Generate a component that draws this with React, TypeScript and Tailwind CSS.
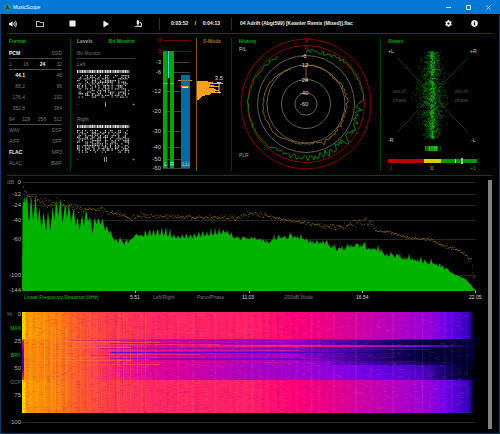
import { ReactNode } from 'react'
import { FaCog, FaInfoCircle, FaMicroscope, FaPlay, FaRegFolder, FaStop, FaVolumeUp } from 'react-icons/fa'

type Point = [number, number]

// Small seeded generator so the plots are the same on every render
function createRandom(seed: number) {
    let state = seed
    return () => {
        state = (state * 1664525 + 1013904223) % 4294967296
        return state / 4294967296
    }
}

function interpolate(keys: Point[], x: number) {
    for (let i = 1; i < keys.length; i++) {
        if (x <= keys[i][0]) {
            const [x0, y0] = keys[i - 1]
            const [x1, y1] = keys[i]
            return y0 + ((y1 - y0) * (x - x0)) / (x1 - x0)
        }
    }
    return keys[keys.length - 1][1]
}

const dot = (x: number, y: number, w = 1, h = 1) => `M${x.toFixed(1)} ${y.toFixed(1)}h${w}v${h}h${-w}z`

/* ---------- Format ---------- */

const formatRows = [
    { cells: ['PCM', 'DSD'], active: 'PCM', line: true },
    { cells: ['1', '16', '24', '32'], active: '24', line: true },
    { cells: ['44.1', '48'], active: '44.1', numeric: true },
    { cells: ['88.2', '96'], numeric: true },
    { cells: ['176.4', '192'], numeric: true },
    { cells: ['352.8', '384'], numeric: true },
    { cells: ['64', '128', '256', '512'], line: true },
    { cells: ['WAV', 'DSF'] },
    { cells: ['AIFF', 'DFF'] },
    { cells: ['FLAC', 'MP3'], active: 'FLAC' },
    { cells: ['ALAC', 'BWF'] },
]

function FormatPanel() {
    return (
        <section className="border-r border-[#003c00] pl-0.5 pr-2">
            <h2 className="mb-[3px] h-[7px] font-bold text-[#00b400]">Format</h2>
            {formatRows.map(row => (
                <div
                    key={row.cells[0]}
                    className={`flex h-[11px] items-center justify-between border-b ${row.line ? 'border-[#4a4a4a]' : 'border-transparent'}`}
                >
                    {row.cells.map((cell, index) => (
                        <span
                            key={cell}
                            className={`${row.numeric && index === 0 ? 'w-4 text-right' : ''} ${cell === row.active ? 'font-bold text-[#f0f0f0]' : 'text-[#787878]'}`}
                        >
                            {cell}
                        </span>
                    ))}
                </div>
            ))}
        </section>
    )
}

/* ---------- Bit monitor ---------- */

function bitPath(seed: number) {
    const random = createRandom(seed)
    let path = ''
    for (let col = 0; col < 32; col++) {
        const x = col * 1.65
        const density = col % 4 === 1 ? 0.75 : 0.25 + random() * 0.35
        for (let row = 0; row < 14; row++) {
            if (random() < density) path += dot(x, 5 + row * 1.65, 1, 1.3)
        }
    }
    return path
}

function BitChannel({ name, seed, marks }: { name: string; seed: number; marks: number }) {
    return (
        <div>
            <div className="flex h-[11px] items-center text-[#828282]">{name}</div>
            <svg viewBox="0 0 58 29" className="block w-full" role="img" aria-label={`${name} bits`}>
                {Array.from({ length: 32 }, (_, i) => (
                    <rect key={i} x={i * 1.65} y="0" width="1.2" height="3" fill={i % 5 === 1 ? '#8c8c8c' : '#f0f0f0'} />
                ))}
                <path d={bitPath(seed)} fill="#d2d2d2" />
            </svg>
            <div className="flex h-[11px] items-center justify-between text-[#a0a0a0]">
                <span>-</span>
                <span className="flex gap-px">
                    {Array.from({ length: marks }, (_, i) => (
                        <i key={i} className="h-[5px] w-px bg-[#8c8c8c]" />
                    ))}
                </span>
                <span>+</span>
            </div>
        </div>
    )
}

function BitMonitor() {
    return (
        <div className="pr-[5px]">
            <div className="mb-[3px] flex h-[7px] items-center justify-between whitespace-nowrap font-bold">
                <button className="text-[#a0a0a0]">Levels</button>
                <button className="text-[#00b400]">Bit Monitor</button>
            </div>
            <div className="flex h-[11px] items-center border-b border-[#3c3c3c] text-[#6e6e6e]">Bit Monitor</div>
            <div className="flex flex-col gap-1">
                <BitChannel name="Left" seed={7} marks={1} />
                <BitChannel name="Right" seed={21} marks={2} />
            </div>
        </div>
    )
}

/* ---------- Level meters ---------- */

const meterScale = [
    { label: '3', y: 40, red: true },
    { label: '0', y: 51, red: true },
    { label: '-3', y: 62 },
    { label: '-6', y: 72 },
    { label: '-12', y: 91 },
    { label: '-20', y: 111 },
    { label: '-30', y: 131 },
    { label: '-40', y: 147 },
    { label: '-50', y: 159 },
    { label: '-60', y: 168 },
]

function LevelMeters() {
    return (
        <svg viewBox="140 38 56 133" className="block w-full overflow-visible text-[6px]" role="img" aria-label="Level meters">
            {meterScale.map(({ label, y, red }) => (
                <g key={label}>
                    <text x="161" y={y + 2} textAnchor="end" fill={red ? '#c80000' : '#c8c8c8'}>{label}</text>
                    <path d={`M163 ${y + 0.5}H190`} stroke={red ? '#780000' : '#404040'} />
                </g>
            ))}
            <rect x="163" y="51" width="4.5" height="117" fill="#00a800" />
            <rect x="170" y="51" width="4" height="117" fill="#00a800" />
            <path d="M163 83.5h4.5M170 83.5h4" stroke="#20f020" />
            <rect x="168" y="51" width="1.5" height="27" fill="#46c8ff" />
            <rect x="181" y="75" width="9" height="93" fill="#006e9b" />
            <path d="M178 80.5h3M190 80.5h2" stroke="#d28c1e" />
            <path d="M181 80.5h9" stroke="#7d7d50" />
            <path d="M181 86.5h8" stroke="#f5a020" />
            <path d="M182 87.5h6" stroke="#e6e6e6" />
            <g fill="#dcdcdc">
                <text x="164" y="166">L</text>
                <text x="170" y="166">R</text>
                <text x="182" y="166">LU</text>
            </g>
        </svg>
    )
}

const loudness = [11, 16, 26, 13, 17, 22, 12, 17, 19, 22, 18, 23, 14, 13, 8, 5, 4, 3, 2]

function ShortTermMode() {
    return (
        <div className="border-l border-[#8a5510]">
            <button className="block h-[7px] w-full pr-1 text-center font-bold text-[#a87020]">S-Mode</button>
            <svg viewBox="197 45 34 124" className="block w-full text-[6px]" role="img" aria-label="Loudness distribution">
                {loudness.map((width, i) => (
                    <rect key={i} x="197" y={81 + i} width={width} height="1" fill="#f5a020" />
                ))}
                <text x="219" y="80" textAnchor="middle" fill="#d2d2d2">3.5</text>
                <path d="M217 82.5h4M219 82v10M217 92.5h4" stroke="#d2d2d2" fill="none" />
            </svg>
        </div>
    )
}

/* ---------- History ---------- */

const historyRings = [
    { r: 65, label: '3', color: '#8c0000' },
    { r: 58.5, label: '0', color: '#8c0000' },
    { r: 48.5, label: '-6', color: '#5f5f5f' },
    { r: 39, label: '-12', color: '#5f5f5f' },
    { r: 24.5, label: '-24', color: '#5f5f5f' },
    { r: 11, label: '-40', color: '#5f5f5f' },
]

const peakKeys: Point[] = [[0, 53], [20, 54], [45, 57], [85, 58], [92, 54], [110, 54], [150, 53], [180, 54], [212, 54], [222, 57], [270, 58], [300, 57], [330, 55]]
const peakNoise: Point[] = [[0, 3], [30, 2], [50, 1], [85, 1], [92, 5], [155, 5], [165, 3], [212, 3], [222, 0.6], [290, 0.7], [330, 1.5]]
const plrKeys: Point[] = [[0, 39], [15, 39], [45, 38], [70, 41], [90, 41], [110, 40], [150, 42], [158, 43], [165, 39], [180, 40], [205, 40], [225, 43], [270, 43], [300, 42], [336, 38]]
const plrNoise: Point[] = [[0, 0.7], [100, 1.5], [160, 2], [180, 1], [336, 0.7]]

function polarTrace(keys: Point[], noise: Point[], end: number, seed: number) {
    const random = createRandom(seed)
    const points: string[] = []
    for (let deg = 0; deg <= end; deg += 2) {
        const r = interpolate(keys, deg) + (random() * 2 - 1) * interpolate(noise, deg)
        const a = (deg * Math.PI) / 180
        points.push(`${(306 + r * Math.sin(a)).toFixed(1)} ${(104 - r * Math.cos(a)).toFixed(1)}`)
    }
    return points.join('L')
}

function HistoryPanel() {
    return (
        <section className="border-r border-[#003c00]">
            <svg viewBox="232 38 148 133" className="block w-full overflow-visible text-[6px]" role="img" aria-label="History">
                <g className="text-[5px]">
                    <text x="239" y="43" className="font-bold" fill="#00b400">History</text>
                    <text x="239" y="51" fill="#c8c8c8">P/L</text>
                    <text x="239" y="157" fill="#a0a0a0">PLR</text>
                </g>
                {historyRings.map(({ r, color }) => (
                    <circle key={r} cx="306" cy="104" r={r} fill="none" stroke={color} />
                ))}
                <path d={`M${polarTrace(peakKeys, peakNoise, 330, 5)}`} fill="none" stroke="#00a000" strokeWidth="0.8" />
                <path d={`M306 82L${polarTrace(plrKeys, plrNoise, 336, 11)}`} fill="none" stroke="#b4761a" strokeWidth="0.8" />
                {historyRings.map(({ r, label }) => (
                    <text key={r} x={r > 50 ? 306 : 304} y={r > 50 ? 107 - r : 106 - r} textAnchor="middle" fill={r > 50 ? '#dc0000' : '#dcdcdc'}>
                        {label}
                    </text>
                ))}
                <text x="304" y="106" textAnchor="middle" fill="#dcdcdc">-60</text>
            </svg>
        </section>
    )
}

/* ---------- Stereo ---------- */

function scatterPath(count: number, spread: number, seed: number) {
    const random = createRandom(seed)
    let path = ''
    for (let i = 0; i < count; i++) {
        const y = 51 + random() * 87
        const bulge = 0.45 + 0.55 * Math.sin(((y - 51) / 87) * Math.PI)
        const x = 432.3 + (random() + random() + random() - 1.5) * spread * bulge
        path += dot(x - 0.5, y, 1, 1)
    }
    return path
}

function StereoPanel() {
    return (
        <section>
            <svg viewBox="381 38 112 133" className="block w-full text-[5px]" role="img" aria-label="Stereo">
                <text x="388" y="43" className="font-bold" fill="#00a000">Stereo</text>
                <path d="M397 57.5L468 132.5M468 57.5L397 132.5" stroke="#2d2d2d" />
                <path d={scatterPath(900, 17, 3)} fill="#006e00" opacity="0.6" />
                <path d={scatterPath(600, 11, 9)} fill="#00a000" opacity="0.6" />
                <path d={scatterPath(330, 3, 17)} fill="#28d228" opacity="0.7" />
                <g fill="#d2d2d2">
                    <text x="388" y="53">+L</text>
                    <text x="470" y="53">+R</text>
                    <text x="388" y="142">-R</text>
                    <text x="471" y="142">-L</text>
                </g>
                <g fill="#505050">
                    <text x="393" y="93">out of</text>
                    <text x="393" y="102">phase</text>
                    <text x="455" y="93">out of</text>
                    <text x="455" y="102">phase</text>
                </g>
                <rect x="425" y="146" width="13" height="5" fill="#008c00" />
                <path d="M429.5 146v5M432 146v5M434.5 146v5M436.5 146v5" stroke="#14d214" />
                <path d="M427 146v5M440.500 146v5" stroke="#004600" />
                <rect x="388" y="159" width="36" height="4" fill="#be0000" />
                <rect x="424" y="159" width="17" height="4" fill="#d7d200" />
                <rect x="441" y="159" width="36" height="4" fill="#009600" />
                <path d="M455.5 159v4" stroke="#a0dca0" />
                <rect x="461" y="158" width="2" height="6" fill="#aab4aa" />
                <text x="388" y="170" fill="#d20000">-1</text>
                <text x="432" y="170" textAnchor="middle" fill="#dcdc00">0</text>
                <text x="476" y="170" textAnchor="end" fill="#00b400">+1</text>
            </svg>
        </section>
    )
}

/* ---------- Spectrum ---------- */

const spectrumScale = [
    { label: '0', y: 182 },
    { label: '-12', y: 194 },
    { label: '-24', y: 205 },
    { label: '-40', y: 220 },
    { label: '-60', y: 239 },
    { label: '-100', y: 275 },
    { label: '-144', y: 290 },
]

// Low end is drawn peak by peak, the rest follows an envelope
const lowPeaks: Point[] = [
    [22.5, 208], [23, 197], [24, 205], [24.5, 196], [25.5, 203], [27, 195], [28.5, 220], [29.5, 219], [31, 194], [33, 220], [34, 214], [35.5, 194],
    [37.5, 224], [39.5, 208], [41.5, 230], [43.5, 212], [46, 231], [48, 212], [50.5, 231], [52.5, 207], [54.5, 220], [56, 201], [58.5, 216],
    [60.5, 198], [62.5, 224], [65, 203], [67, 218], [69, 204], [71, 223], [73.5, 209], [76, 226], [77.5, 217], [79.5, 230], [82, 215], [84, 226],
    [86, 209], [88, 222], [90, 217], [92.5, 234], [94.5, 218], [96.5, 224], [98.5, 218], [100.5, 225], [102.5, 219], [105, 231], [106.5, 226],
    [109, 233], [110.5, 231], [114, 241], [116, 239], [118, 243], [120, 238], [122, 241], [124.5, 245], [126, 239], [128, 243], [130, 240], [133, 238],
    [136, 234], [139, 236], [141, 235], [144, 237],
]
const floorKeys: Point[] = [[144, 236], [165, 235], [175, 238], [190, 238], [205, 236], [225, 233], [232, 237], [240, 241], [250, 239], [258, 240], [267, 244], [275, 240], [302, 239], [308, 244], [325, 244], [335, 251], [350, 250], [360, 248], [372, 251], [385, 256], [400, 260], [420, 263], [435, 265], [445, 270], [455, 275], [465, 279], [470, 284], [475, 290]]
const peakHeight: Point[] = [[144, 11], [170, 9], [180, 5], [195, 7], [215, 9], [228, 6], [240, 6], [260, 6], [300, 7], [360, 8], [420, 8], [450, 3], [475, 0]]
const maxKeys: Point[] = [[23, 189], [28, 196], [35, 198], [45, 202], [60, 203], [80, 209], [100, 209], [115, 213], [130, 218], [140, 215], [160, 216], [200, 217], [240, 217], [250, 212], [260, 214], [275, 217], [300, 222], [325, 226], [345, 225], [355, 222], [372, 222], [375, 230], [390, 232], [410, 238], [430, 239], [445, 246], [460, 251], [471, 259], [473, 276], [475, 277]]
const maxNoise: Point[] = [[23, 5], [60, 6], [80, 4], [130, 3], [160, 3], [180, 2], [260, 4], [280, 1.5], [330, 3], [350, 6], [371, 5], [375, 1], [475, 2]]

function spectrumPath() {
    const random = createRandom(31)
    const points = [...lowPeaks]
    for (let x = 145; x < 475; x += 1) {
        const harmonic = Math.max(0, Math.sin(((x - 144.3) / 4.1) * Math.PI * 2))
        const spike = x < 235 ? harmonic * (0.5 + random() * 0.5) : random() * random() * 1.3
        points.push([x, interpolate(floorKeys, x) - spike * interpolate(peakHeight, x)])
    }
    return `M22 291L${points.map(([x, y]) => `${x} ${y.toFixed(1)}`).join('L')}L476 291Z`
}

function maximaPath() {
    const random = createRandom(77)
    let path = ''
    for (let x = 23; x < 475; x += 0.8) {
        path += dot(x, interpolate(maxKeys, x) + (random() + random() - 1) * interpolate(maxNoise, x), 1, 0.8)
    }
    return path
}

function Spectrum() {
    return (
        <section>
            <svg viewBox="7 176 475 117" className="block w-full overflow-visible text-[6px]" role="img" aria-label="Linear frequency spectrum">
                <text x="7" y="184" fill="#787878">dB</text>
                {spectrumScale.map(({ label, y }) => (
                    <g key={label}>
                        <path d={`M23 ${y + 0.5}H476`} stroke="#262626" />
                        <text x="21" y={y + 2} textAnchor="end" fill="#b4b4b4">{label}</text>
                    </g>
                ))}
                <path d={spectrumPath()} fill="#00b400" />
                <path d={maximaPath()} fill="#96690f" />
                <path d="M135.500 291v2M249.500 291v2M362.500 291v2M475.500 291v2" stroke="#b4b4b4" />
            </svg>
            <div className="ml-[17px] grid h-2 grid-cols-[106fr_23fr_44fr_45fr_41fr_73fr_113fr_13fr] items-center justify-items-start whitespace-nowrap text-[#787878]">
                <h2 className="text-[#00c800]">Linear Frequency Spectrum [kHz]</h2>
                <span className="text-[#dcdcdc]">5.51</span>
                <button>Left/Right</button>
                <button>Pano/Phase</button>
                <span className="text-[#dcdcdc]">11.03</span>
                <button>-200dB Mode</button>
                <span className="text-[#dcdcdc]">16.54</span>
                <span className="text-[#dcdcdc]">22.05</span>
            </div>
        </section>
    )
}

/* ---------- Spectrogram ---------- */

// [x, colour] stops along the frequency axis
const loudStops: [number, string][] = [
    [22, '#ffd200'], [25, '#ffcd00'], [26, '#ff9b00'], [45, '#ff8c08'], [62, '#ff7814'], [80, '#ff5530'], [105, '#ff3c48'], [150, '#ff2860'], [250, '#ff1e69'],
    [295, '#ff0078'], [325, '#f00087'], [360, '#d200a5'], [400, '#b400c8'], [430, '#9600dc'], [445, '#7300f0'], [460, '#4b00d7'], [470, '#3200aa'], [472, '#0a003c'], [475, '#000000'],
]
const quietStops: [number, string][] = [
    [22, '#ff8c00'], [50, '#ff7d10'], [80, '#ff5a30'], [105, '#ff2864'], [135, '#f01087'], [175, '#dc0096'], [225, '#be00b4'], [250, '#af00be'],
    [300, '#a000d2'], [345, '#8200eb'], [380, '#6400eb'], [420, '#4600c8'], [440, '#1e0082'], [460, '#05003c'], [475, '#000010'],
]

function Stops({ stops }: { stops: [number, string][] }) {
    return (
        <>
            {stops.map(([x, color]) => (
                <stop key={x} offset={(x - 22) / 453} stopColor={color} />
            ))}
        </>
    )
}

function noisePath(seed: number, count: number, wide: boolean) {
    const random = createRandom(seed)
    let path = ''
    for (let i = 0; i < count; i++) {
        const x = 22 + random() * 445
        path += wide ? dot(x, 313 + Math.floor(random() * 100), 4, 1) : dot(x, 313 + Math.floor(random() * 97), 1, 3)
    }
    return path
}

const verticalStreaks = [30, 34, 37, 44, 51, 55, 59, 66, 73, 80, 87, 94, 101, 109, 117, 123, 130, 137, 145]

// Thin time slices in the quiet part: y, first x, last x, colour, opacity
const slices: [number, number, number, string, number][] = [
    [340, 70, 475, '#8200c8', 0.4], [341, 40, 120, '#ff9600', 0.4], [342, 70, 160, '#ff6e28', 0.6], [343, 110, 475, '#4600b4', 0.35],
    [344, 60, 220, '#ff5a46', 0.45], [347, 50, 130, '#ff9614', 0.5], [348, 100, 475, '#5a00c8', 0.4], [350, 90, 300, '#ff3264', 0.4],
    [352, 110, 475, '#3200e6', 0.8], [354, 70, 200, '#ff5032', 0.4], [355, 90, 475, '#a000d2', 0.4], [357, 45, 105, '#ff8c1e', 0.5],
    [358, 110, 300, '#5500dc', 0.5], [359, 150, 310, '#3c00dc', 0.6], [360, 30, 130, '#ff8c1e', 0.5], [362, 100, 300, '#ff1478', 0.4], [364, 80, 160, '#ff5a32', 0.6], [365, 120, 260, '#e600a0', 0.3],
]

function Spectrogram() {
    const random = createRandom(404)
    return (
        <section className="mt-1 flex">
            <div className="mb-[3px] mt-1.5 flex w-3.5 shrink-0 flex-col items-end justify-between text-[#b4b4b4]">
                <span className="flex w-full justify-between text-[6px]"><span className="text-[#787878]">%</span>0</span>
                <button className="text-[#00c800]">MAX</button>
                <span className="text-[6px]">25</span>
                <button className="text-[#00c800]">BRY</button>
                <span className="text-[6px]">50</span>
                <button className="text-[#787878]">COF</button>
                <span className="text-[6px]">75</span>
                <span aria-hidden="true">&nbsp;</span>
                <span className="text-[6px]">100</span>
            </div>
            <svg viewBox="21 305 461 124" className="block min-w-0 flex-1" role="img" aria-label="Spectrogram">
                <defs>
                    <linearGradient id="loud" gradientUnits="userSpaceOnUse" x1="22" x2="475" y1="0" y2="0"><Stops stops={loudStops} /></linearGradient>
                    <linearGradient id="quiet" gradientUnits="userSpaceOnUse" x1="22" x2="475" y1="0" y2="0"><Stops stops={quietStops} /></linearGradient>
                    <linearGradient id="dusk" gradientUnits="userSpaceOnUse" x1="290" x2="425" y1="0" y2="0">
                        <stop offset="0" stopColor="#000046" stopOpacity="0" />
                        <stop offset="1" stopColor="#000032" stopOpacity="0.95" />
                    </linearGradient>
                    <linearGradient id="beam" gradientUnits="userSpaceOnUse" x1="180" x2="470" y1="0" y2="0">
                        <stop offset="0" stopColor="#ff3264" stopOpacity="0.3" />
                        <stop offset="0.35" stopColor="#ff2864" />
                        <stop offset="0.6" stopColor="#e600a0" />
                        <stop offset="0.85" stopColor="#6e00e6" />
                        <stop offset="1" stopColor="#0a0046" />
                    </linearGradient>
                    <linearGradient id="rise" x1="0" x2="0" y1="0" y2="1">
                        <stop offset="0" stopColor="#a000dc" stopOpacity="0" />
                        <stop offset="1" stopColor="#b400dc" stopOpacity="0.75" />
                    </linearGradient>
                    <linearGradient id="edge" x1="0" x2="0" y1="0" y2="1">
                        <stop offset="0" stopColor="#dc1e64" />
                        <stop offset="0.3" stopColor="#6400be" />
                        <stop offset="0.7" stopColor="#3c00aa" />
                        <stop offset="1" stopColor="#e63c46" />
                    </linearGradient>
                </defs>
                <rect x="22" y="312" width="453" height="101" fill="url(#loud)" />
                <rect x="22" y="339" width="453" height="41" fill="url(#quiet)" />
                {slices.map(([y, from, to, color, opacity]) => (
                    <rect key={y} x={from} y={y} width={to - from} height="1" fill={color} opacity={opacity} />
                ))}
                <rect x="290" y="340" width="185" height="21" fill="url(#dusk)" />
                <rect x="180" y="345" width="295" height="2" fill="url(#beam)" />
                <rect x="300" y="349" width="130" height="1" fill="#6400e6" opacity="0.5" />
                <rect x="330" y="361" width="145" height="4" fill="url(#dusk)" opacity="0.7" />
                {Array.from({ length: 150 }, (_, i) => (
                    <rect key={i} x={120 + i * 2.1} y={360 + random() * 4} width="1.500" height="16" fill="url(#rise)" opacity={random() * 0.6} />
                ))}
                <rect x="22" y="340" width="2" height="40" fill="url(#edge)" />
                {verticalStreaks.map((x, i) => (
                    <rect key={x} x={x} y={i % 3 ? 328 : 313} width="1" height={i % 3 ? 79 : 94} fill={x < 70 ? '#ffc81e' : '#ff8c1e'} opacity={x < 70 ? 0.35 : 0.3} />
                ))}
                {Array.from({ length: 120 }, (_, i) => (
                    <rect key={i} x={26 + i * 3.7} y="313" width="1.500" height="100" fill={i % 2 ? '#fff' : '#000'} opacity={random() * 0.07} />
                ))}
                <path d={noisePath(1, 1100, true)} fill="#ffaa3c" opacity="0.09" />
                <path d={noisePath(2, 1100, true)} fill="#500096" opacity="0.1" />
                <path d={noisePath(3, 900, false)} fill="#5000a0" opacity="0.08" />
                <path d="M22 422.500H475" stroke="#262626" />
            </svg>
        </section>
    )
}

/* ---------- Window ---------- */

function IconButton({ label, className, children }: { label: string; className: string; children: ReactNode }) {
    return (
        <button aria-label={label} className={`flex justify-center ${className}`}>
            {children}
        </button>
    )
}

function TitleBar() {
    return (
        <header className="flex h-3.5 items-center bg-[#0078d7] pl-1 text-white">
            <svg viewBox="0 0 14 14" className="size-[7px]" aria-hidden="true">
                <circle cx="7" cy="7" r="7" fill="#2f8f8a" />
                <path d="M7 2.500L5 8l-1.500 3.500M7 2.500l1 5 2.500 4M5 8h3" fill="none" stroke="#0c2f3c" strokeWidth="1.800" />
            </svg>
            <h1 className="ml-0.5 flex-1">MusicScope</h1>
            <div className="flex gap-[3px] pr-[3px]">
                <IconButton label="Minimize" className="w-[17px]">
                    <svg viewBox="0 0 5 5" className="size-[5px]"><path d="M0 2.500h5" stroke="#d2e8fa" /></svg>
                </IconButton>
                <IconButton label="Maximize" className="w-[17px]">
                    <svg viewBox="0 0 5 5" className="size-[5px]"><path d="M.5.5h4v4h-4z" fill="none" stroke="#d2e8fa" /></svg>
                </IconButton>
                <IconButton label="Close" className="w-[17px]">
                    <svg viewBox="0 0 5 5" className="size-[5px]"><path d="M.3.3l4.400 4.400M4.700.3L.3 4.700" stroke="#d2e8fa" strokeWidth="0.800" /></svg>
                </IconButton>
            </div>
        </header>
    )
}

function Toolbar() {
    return (
        <div className="flex h-5 items-center border-b border-[#004b00] pr-1.5 font-bold text-[#f0f0f0]">
            <IconButton label="Volume" className="w-3"><FaVolumeUp className="size-2" /></IconButton>
            <div className="ml-1 flex items-center">
                <IconButton label="Open" className="w-[33px]"><FaRegFolder className="size-2" /></IconButton>
                <IconButton label="Stop" className="w-[33px]"><FaStop className="size-[7px]" /></IconButton>
                <IconButton label="Play" className="w-[33px]"><FaPlay className="size-[6px]" /></IconButton>
                <IconButton label="Analyze" className="w-[33px]"><FaMicroscope className="size-[7px]" /></IconButton>
            </div>
            <div className="ml-1 mr-2 flex h-3 w-[73px] items-center justify-between border-x border-[#004b00] px-[11px]">
                <span>0:03:52</span>
                <span>/</span>
                <span>0:04:13</span>
            </div>
            <span className="min-w-0 flex-1 truncate">04 Adrift (Abgt599) [Keanler Remix (Mixed)].flac</span>
            <IconButton label="Settings" className="w-[26px]"><FaCog className="size-[7px]" /></IconButton>
            <IconButton label="Info" className="w-[26px]"><FaInfoCircle className="size-[7px]" /></IconButton>
        </div>
    )
}

export default function App() {
    return (
        <div className="flex min-h-screen flex-col bg-black font-['Liberation_Sans',Arial,sans-serif] text-[5px] leading-[7px]">
            <TitleBar />
            <main className="flex-1 border-x border-b border-[#0b3c68] px-1.5">
                <Toolbar />
                <div className="grid grid-cols-[64fr_161fr_149fr_112fr] border-b border-[#004b00] pb-1 pt-1">
                    <FormatPanel />
                    <div className="grid grid-cols-[63fr_56fr_35fr] border-r border-[#003c00] pl-1.5">
                        <BitMonitor />
                        <LevelMeters />
                        <ShortTermMode />
                    </div>
                    <HistoryPanel />
                    <StereoPanel />
                </div>
                <div className="flex gap-1.5">
                    <div className="min-w-0 flex-1">
                        <Spectrum />
                        <Spectrogram />
                    </div>
                    <div className="mr-px mt-1 w-1 bg-[#828282]" />
                </div>
            </main>
        </div>
    )
}
